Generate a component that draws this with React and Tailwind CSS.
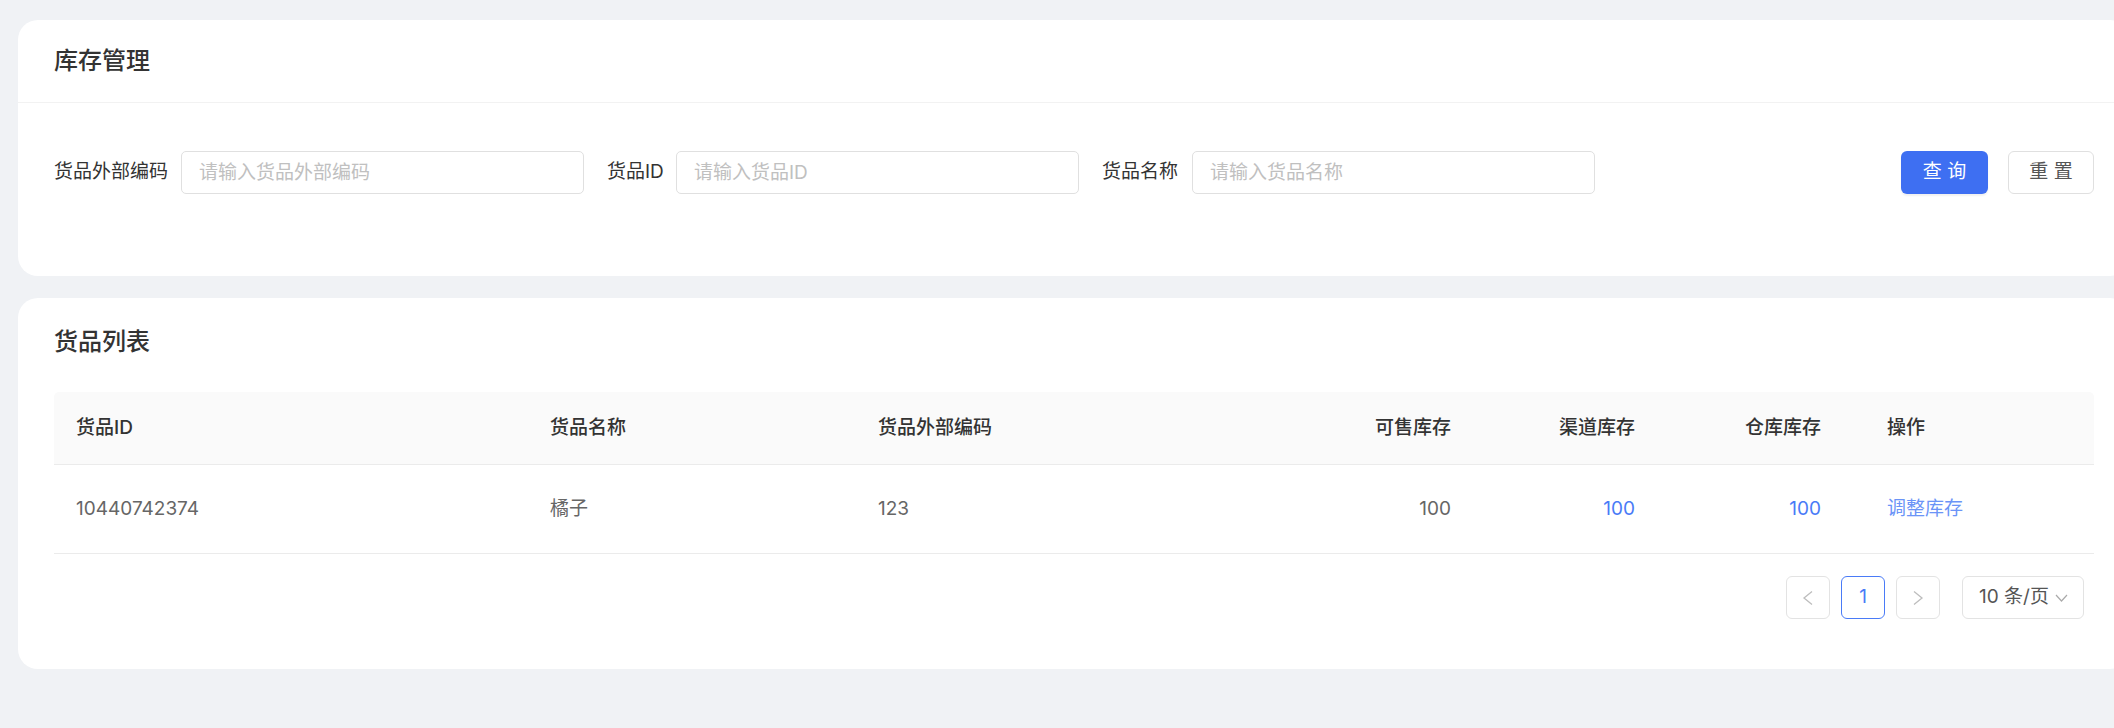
import React from "react";

const columns = [
  { title: "货品ID", align: "left" },
  { title: "货品名称", align: "left" },
  { title: "货品外部编码", align: "left" },
  { title: "可售库存", align: "right" },
  { title: "渠道库存", align: "right" },
  { title: "仓库库存", align: "right" },
  { title: "操作", align: "left" },
];

const rows = [
  { id: "10440742374", name: "橘子", code: "123", sale: "100", channel: "100", warehouse: "100" },
];

function FormItem({ label, placeholder, labelClass }) {
  return (
    <div className="flex items-center">
      <span className={"mr-[14px] text-[19px] text-[#333] whitespace-nowrap " + labelClass}>{label}</span>
      <input
        placeholder={placeholder}
        className="w-[403px] h-[43px] rounded-[5px] border border-[#e0e0e0] pl-[17px] pr-3 text-[19px] text-[#333] outline-none placeholder:text-[#c0c0c0]"
      />
    </div>
  );
}

function Chevron({ dir }) {
  return (
    <svg width="12" height="16" viewBox="0 0 12 16" fill="none" stroke="#bdbdbd" strokeWidth="1.3">
      {dir === "left" ? <polyline points="10,1.5 2,8 10,14.5" /> : <polyline points="2,1.5 10,8 2,14.5" />}
    </svg>
  );
}

function App() {
  return (
    <div className="min-h-screen w-full overflow-hidden bg-[#f0f2f5] font-['Inter','Noto_Sans_CJK_SC',sans-serif]">
      <div className="pl-[18px] pt-[20px] flex flex-col gap-[22px]">
        {/* 查询区 */}
        <div className="w-[2112px] shrink-0 bg-white rounded-[20px]">
          <div className="h-[83px] flex items-center px-[36px] border-b border-[#f2f2f2]">
            <h1 className="text-[24px] font-medium text-[#333]">库存管理</h1>
          </div>
          <div className="flex items-center gap-[23px] px-[36px] pt-[48px] pb-[82px]">
            <FormItem label="货品外部编码" placeholder="请输入货品外部编码" labelClass="w-[113px]" />
            <FormItem label="货品ID" placeholder="请输入货品ID" labelClass="w-[55px]" />
            <FormItem label="货品名称" placeholder="请输入货品名称" labelClass="w-[76px]" />
            <div className="ml-auto flex items-center gap-[20px]">
              <button className="w-[87px] h-[43px] rounded-[6px] bg-[#3e6ff2] text-white text-[19px] shadow-[0_2px_2px_rgba(0,0,0,0.06)]">查 询</button>
              <button className="w-[86px] h-[43px] rounded-[6px] border border-[#e0e0e0] bg-white text-[#555] text-[19px]">重 置</button>
            </div>
          </div>
        </div>

        {/* 列表区 */}
        <div className="w-[2112px] shrink-0 bg-white rounded-[20px] px-[36px] pt-[28px] pb-[50px]">
          <h2 className="h-[32px] leading-[32px] text-[24px] font-medium text-[#333]">货品列表</h2>
          <div className="mt-[34px]">
            <div className="grid grid-cols-[474px_328px_344px_273px_184px_186px_1fr] h-[73px] items-center bg-[#fafafa] rounded-t-[5px] border-b border-[#ebebeb]">
              {columns.map((c, i) => (
                <div
                  key={c.title}
                  className={
                    c.align === "right"
                      ? "px-[22px] text-right text-[19px] font-medium text-[#333]"
                      : i === 6
                      ? "pl-[44px] text-[19px] font-medium text-[#333]"
                      : "px-[22px] text-[19px] font-medium text-[#333]"
                  }
                >
                  {c.title}
                </div>
              ))}
            </div>
            {rows.map((r) => (
              <div key={r.id} className="grid grid-cols-[474px_328px_344px_273px_184px_186px_1fr] h-[89px] items-center border-b border-[#ebebeb] text-[19px] text-[#666]">
                <div className="px-[22px]">{r.id}</div>
                <div className="px-[22px]">{r.name}</div>
                <div className="px-[22px]">{r.code}</div>
                <div className="px-[22px] text-right">{r.sale}</div>
                <div className="px-[22px] text-right text-[#4a7bf7]">{r.channel}</div>
                <div className="px-[22px] text-right text-[#4a7bf7]">{r.warehouse}</div>
                <div className="pl-[44px] text-[#6b94f7] cursor-pointer">调整库存</div>
              </div>
            ))}
          </div>

          <div className="flex justify-end items-center mt-[22px] pr-[10px]">
            <button className="w-[44px] h-[43px] rounded-[6px] border border-[#e3e3e3] flex items-center justify-center">
              <Chevron dir="left" />
            </button>
            <button className="ml-[11px] w-[44px] h-[43px] rounded-[6px] border border-[#4a7bf7] text-[#4a7bf7] text-[19px] flex items-center justify-center">1</button>
            <button className="ml-[11px] w-[44px] h-[43px] rounded-[6px] border border-[#e3e3e3] flex items-center justify-center">
              <Chevron dir="right" />
            </button>
            <div className="ml-[22px] w-[122px] h-[43px] rounded-[6px] border border-[#e3e3e3] flex items-center pl-[16px] text-[19px] text-[#555]">
              <span>10 条/页</span>
              <svg className="ml-[6px]" width="13" height="8" viewBox="0 0 13 8" fill="none" stroke="#aaa" strokeWidth="1.2">
                <polyline points="1,1 6.5,7 12,1" />
              </svg>
            </div>
          </div>
        </div>
      </div>
    </div>
  );
}

export default App;
